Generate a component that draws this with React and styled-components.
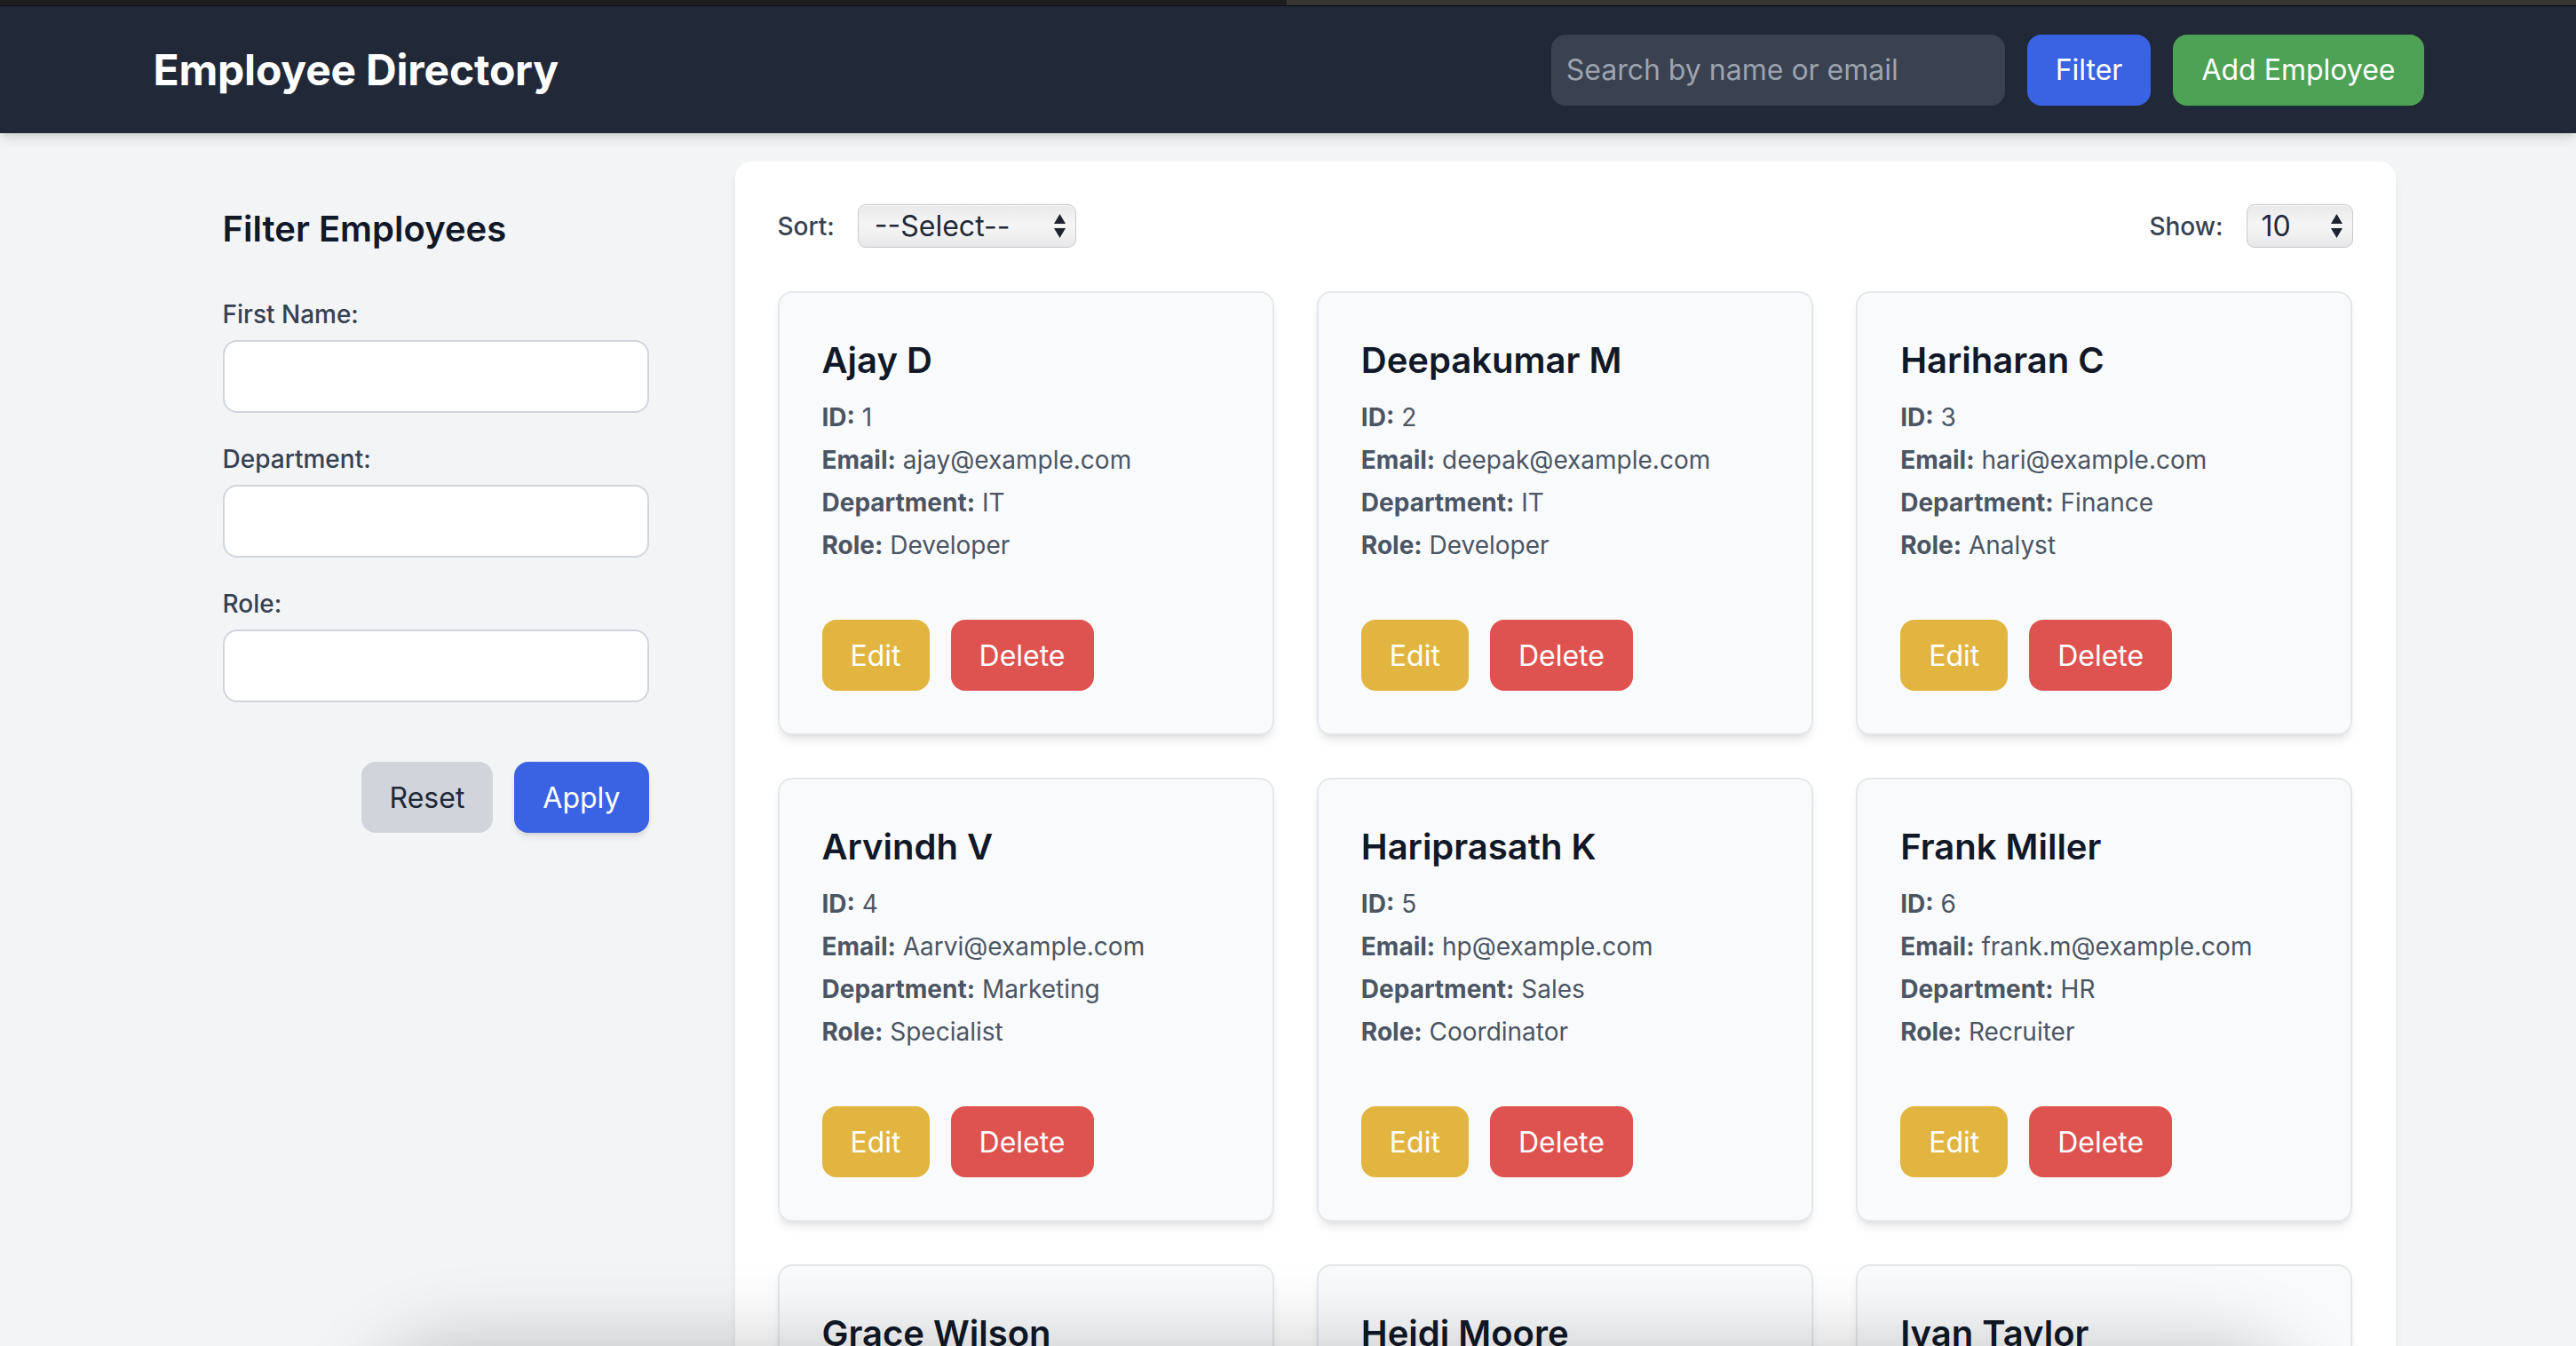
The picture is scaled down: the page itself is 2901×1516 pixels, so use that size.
import styled, { createGlobalStyle } from 'styled-components';

const GlobalStyle = createGlobalStyle`
  html, body {
    margin: 0;
    padding: 0;
    background: #f3f4f6;
    font-family: Inter, "Noto Sans", "Liberation Sans", sans-serif;
  }
  * {
    box-sizing: border-box;
  }
`;

const employees = [
    {id: 1, name: 'Ajay D', email: 'ajay@example.com', department: 'IT', role: 'Developer'},
    {id: 2, name: 'Deepakumar M', email: 'deepak@example.com', department: 'IT', role: 'Developer'},
    {id: 3, name: 'Hariharan C', email: 'hari@example.com', department: 'Finance', role: 'Analyst'},
    {id: 4, name: 'Arvindh V', email: 'Aarvi@example.com', department: 'Marketing', role: 'Specialist'},
    {id: 5, name: 'Hariprasath K', email: 'hp@example.com', department: 'Sales', role: 'Coordinator'},
    {id: 6, name: 'Frank Miller', email: 'frank.m@example.com', department: 'HR', role: 'Recruiter'},
    {id: 7, name: 'Grace Wilson', email: 'grace@example.com', department: 'Finance', role: 'Accountant'},
    {id: 8, name: 'Heidi Moore', email: 'heidi@example.com', department: 'IT', role: 'Designer'},
    {id: 9, name: 'Ivan Taylor', email: 'ivan@example.com', department: 'Sales', role: 'Manager'},
];

const TopStrip = styled.div`
  display: flex;
  height: 7px;
  border-bottom: 1px solid #0c0c0c;
`;

const TabSegment = styled.div`
  height: 100%;
  flex: ${({grow}) => grow};
  background: ${({tone}) => tone};
`;

const Header = styled.header`
  position: relative;
  z-index: 1;
  background: #212837;
  height: 143px;
  box-shadow: 0 8px 12px -2px rgba(0, 0, 0, 0.12), 0 4px 6px -4px rgba(0, 0, 0, 0.1);
`;

const HeaderInner = styled.div`
  width: 2560px;
  height: 100%;
  margin: 0 auto;
  display: flex;
  align-items: center;
  justify-content: space-between;
`;

const Title = styled.h1`
  margin: 0 0 0 2px;
  color: #ffffff;
  font-size: 48px;
  font-weight: 700;
  letter-spacing: -0.2px;
`;

const HeaderActions = styled.div`
  display: flex;
  align-items: center;
  gap: 25px;
  margin-right: 1px;
`;

const SearchInput = styled.input`
  width: 511px;
  height: 80px;
  padding: 0 17px;
  border: none;
  border-radius: 16px;
  background: #3a4151;
  color: #ffffff;
  font-family: inherit;
  font-size: 32px;
  outline: none;

  &::placeholder {
    color: #9ca3af;
  }
`;

const Button = styled.button`
  height: 80px;
  padding: 0 32px;
  border: none;
  border-radius: 16px;
  background: ${({bg}) => bg};
  color: ${({fg}) => fg || '#ffffff'};
  font-family: inherit;
  font-size: 32px;
  font-weight: 400;
  cursor: pointer;
  box-shadow: ${({flat}) => flat ? 'none' : '0 6px 10px -3px rgba(0, 0, 0, 0.12), 0 3px 6px -3px rgba(0, 0, 0, 0.1)'};
`;

const Main = styled.main`
  width: 2560px;
  margin: 0 auto;
  display: flex;
  align-items: flex-start;
`;

const Sidebar = styled.aside`
  width: 640px;
  flex-shrink: 0;
  padding: 80px;
`;

const SidebarTitle = styled.h2`
  margin: 0 0 48px;
  color: #111827;
  font-size: 40px;
  line-height: 56px;
  font-weight: 600;
`;

const Field = styled.div`
  margin-bottom: 32px;
`;

const FieldLabel = styled.label`
  display: block;
  margin-bottom: 9px;
  color: #374151;
  font-size: 28px;
  line-height: 40px;
  font-weight: 500;
`;

const TextInput = styled.input`
  display: block;
  width: 100%;
  height: 82px;
  padding: 0 20px;
  border: 2px solid #d1d5db;
  border-radius: 16px;
  background: #ffffff;
  font-family: inherit;
  font-size: 28px;
  outline: none;
`;

const SidebarButtons = styled.div`
  display: flex;
  justify-content: flex-end;
  gap: 24px;
  margin-top: 67px;
`;

const Panel = styled.section`
  width: 1870px;
  margin: 32px 0 0 17px;
  padding: 48px;
  background: #ffffff;
  border-radius: 18px;
  box-shadow: 0 8px 14px -3px rgba(0, 0, 0, 0.08), 0 4px 8px -4px rgba(0, 0, 0, 0.06);
`;

const Toolbar = styled.div`
  display: flex;
  align-items: center;
  justify-content: space-between;
  margin-bottom: 49px;
`;

const ToolbarGroup = styled.div`
  display: flex;
  align-items: center;
  gap: 26px;
`;

const ToolbarLabel = styled.span`
  color: #374151;
  font-size: 28px;
  font-weight: 500;
`;

const SelectBox = styled.label`
  display: flex;
  align-items: center;
  width: ${({width}) => width}px;
  height: 49px;
  padding-right: 10px;
  border: 1px solid #c9c9cc;
  border-radius: 9px;
  background: linear-gradient(to bottom, #e9e9ea 0%, #f5f5f6 45%, #f1f1f2 70%, #e6e6e8 100%);
  box-shadow: inset 0 1px 0 rgba(255, 255, 255, 0.7);
`;

const NativeSelect = styled.select`
  flex: 1;
  min-width: 0;
  height: 100%;
  padding-left: ${({inset}) => inset}px;
  border: none;
  background: transparent;
  color: #1f2937;
  font-family: inherit;
  font-size: 32px;
  appearance: none;
  outline: none;
`;

const CardGrid = styled.div`
  display: grid;
  grid-template-columns: repeat(3, 1fr);
  gap: 48px;
`;

const Card = styled.article`
  padding: 48px;
  background: #f9fafb;
  border: 2px solid #e5e7eb;
  border-radius: 16px;
  box-shadow: 0 8px 12px -3px rgba(0, 0, 0, 0.1), 0 4px 6px -4px rgba(0, 0, 0, 0.08);
`;

const CardName = styled.h3`
  margin: 0 0 16px;
  color: #111827;
  font-size: 40px;
  line-height: 56px;
  font-weight: 600;
`;

const InfoLine = styled.p`
  margin: 0 0 8px;
  color: #4b5563;
  font-size: 28px;
  line-height: 40px;

  strong {
    font-weight: 700;
  }
`;

const CardActions = styled.div`
  display: flex;
  gap: 24px;
  margin-top: 64px;
`;

const WindowShadow = styled.div`
  position: fixed;
  left: 440px;
  right: 330px;
  top: 1545px;
  height: 200px;
  border-radius: 80px;
  pointer-events: none;
  box-shadow: 0 0 90px 30px rgba(0, 0, 0, 0.22);
`;

const SelectArrows = () => (
    <svg width="15" height="29" viewBox="0 0 15 29">
        <path d="M7.5 1 L14 12 L1 12 Z" fill="#1f2330"/>
        <path d="M1 17 L14 17 L7.5 28 Z" fill="#1f2330"/>
    </svg>
);

const EmployeeCard = ({employee}) => (
    <Card>
        <CardName>{employee.name}</CardName>
        <InfoLine><strong>ID:</strong> {employee.id}</InfoLine>
        <InfoLine><strong>Email:</strong> {employee.email}</InfoLine>
        <InfoLine><strong>Department:</strong> {employee.department}</InfoLine>
        <InfoLine><strong>Role:</strong> {employee.role}</InfoLine>
        <CardActions>
            <Button bg="#e1b53f" flat>Edit</Button>
            <Button bg="#de534f" flat>Delete</Button>
        </CardActions>
    </Card>
);

export default function App() {
    return (
        <>
            <GlobalStyle/>
            <TopStrip>
                <TabSegment grow={1449} tone="#1e1e1e"/>
                <TabSegment grow={1452} tone="#383634"/>
            </TopStrip>
            <Header>
                <HeaderInner>
                    <Title>Employee Directory</Title>
                    <HeaderActions>
                        <SearchInput placeholder="Search by name or email"/>
                        <Button bg="#3a63e3" flat>Filter</Button>
                        <Button bg="#4ea255" flat>Add Employee</Button>
                    </HeaderActions>
                </HeaderInner>
            </Header>
            <Main>
                <Sidebar>
                    <SidebarTitle>Filter Employees</SidebarTitle>
                    <Field>
                        <FieldLabel>First Name:</FieldLabel>
                        <TextInput/>
                    </Field>
                    <Field>
                        <FieldLabel>Department:</FieldLabel>
                        <TextInput/>
                    </Field>
                    <Field>
                        <FieldLabel>Role:</FieldLabel>
                        <TextInput/>
                    </Field>
                    <SidebarButtons>
                        <Button bg="#d1d5db" fg="#1f2937" flat>Reset</Button>
                        <Button bg="#3a63e3">Apply</Button>
                    </SidebarButtons>
                </Sidebar>
                <Panel>
                    <Toolbar>
                        <ToolbarGroup>
                            <ToolbarLabel>Sort:</ToolbarLabel>
                            <SelectBox width={246}>
                                <NativeSelect inset={18} defaultValue="">
                                    <option value="">--Select--</option>
                                    <option value="name">Name</option>
                                    <option value="department">Department</option>
                                </NativeSelect>
                                <SelectArrows/>
                            </SelectBox>
                        </ToolbarGroup>
                        <ToolbarGroup>
                            <ToolbarLabel>Show:</ToolbarLabel>
                            <SelectBox width={120}>
                                <NativeSelect inset={16} defaultValue="10">
                                    <option value="10">10</option>
                                    <option value="25">25</option>
                                    <option value="50">50</option>
                                </NativeSelect>
                                <SelectArrows/>
                            </SelectBox>
                        </ToolbarGroup>
                    </Toolbar>
                    <CardGrid>
                        {employees.map(employee => (
                            <EmployeeCard key={employee.id} employee={employee}/>
                        ))}
                    </CardGrid>
                </Panel>
            </Main>
            <WindowShadow/>
        </>
    );
}
